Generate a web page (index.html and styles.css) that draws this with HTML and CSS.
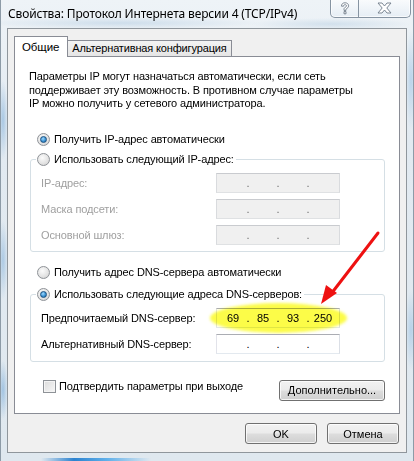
FILE: index.html
```html
<!DOCTYPE html>
<html lang="ru">
<head>
<meta charset="utf-8">
<title>Свойства: Протокол Интернета версии 4 (TCP/IPv4)</title>
<link rel="stylesheet" href="styles.css">
</head>
<body>
<div class="window">
  <div class="titlebar">
    <span class="title">Свойства: Протокол Интернета версии 4 (TCP/IPv4)</span>
    <div class="caption-btns">
      <div class="cbtn help">
        <svg width="12" height="13" viewBox="0 0 12 13"><path d="M2.5 4.2 C2.5 1.8 4 0.8 6 0.8 C8.2 0.8 9.6 2 9.6 3.8 C9.6 5.4 8.4 6.1 7.4 6.7 C7 7 7 7.2 7 7.8 L7 8.4 L5 8.4 L5 7.4 C5 6.2 5.6 5.6 6.5 5.1 C7.3 4.6 7.6 4.3 7.6 3.8 C7.6 3.1 7 2.7 6 2.7 C5 2.7 4.5 3.3 4.5 4.2 Z M5 9.6 L7 9.6 L7 11.8 L5 11.8 Z" fill="#fff" stroke="#6f7c89" stroke-width="0.9" stroke-linejoin="round"/></svg>
      </div>
      <div class="cbtn close">
        <svg width="15" height="12" viewBox="0 0 15 12"><path d="M1 1 L5 1 L7.5 4 L10 1 L14 1 L9.8 6 L14 11 L10 11 L7.5 8 L5 11 L1 11 L5.2 6 Z" fill="#fff" stroke="#6f7c89" stroke-width="0.9" stroke-linejoin="round"/></svg>
      </div>
    </div>
  </div>

  <div class="client">
    <div class="tabs">
      <div class="tab active">Общие</div>
      <div class="tab">Альтернативная конфигурация</div>
    </div>
    <div class="panel">
      <p class="desc">Параметры IP могут назначаться автоматически, если сеть<br>поддерживает эту возможность. В противном случае параметры<br>IP можно получить у сетевого администратора.</p>

      <div class="opt opt-ip-auto"><span class="radio checked"></span><span>Получить IP-адрес автоматически</span></div>

      <div class="group group-ip">
        <div class="legend"><span class="radio"></span><span>Использовать следующий IP-адрес:</span></div>
        <div class="frow"><span class="lbl dis">IP-адрес:</span><div class="ip dis"><span class="seg"></span><span class="dot">.</span><span class="seg"></span><span class="dot">.</span><span class="seg"></span><span class="dot">.</span><span class="seg"></span></div></div>
        <div class="frow"><span class="lbl dis">Маска подсети:</span><div class="ip dis"><span class="seg"></span><span class="dot">.</span><span class="seg"></span><span class="dot">.</span><span class="seg"></span><span class="dot">.</span><span class="seg"></span></div></div>
        <div class="frow"><span class="lbl dis">Основной шлюз:</span><div class="ip dis"><span class="seg"></span><span class="dot">.</span><span class="seg"></span><span class="dot">.</span><span class="seg"></span><span class="dot">.</span><span class="seg"></span></div></div>
      </div>

      <div class="opt opt-dns-auto"><span class="radio"></span><span>Получить адрес DNS-сервера автоматически</span></div>

      <div class="group group-dns">
        <div class="legend"><span class="radio checked"></span><span>Использовать следующие адреса DNS-серверов:</span></div>
        <div class="frow"><span class="lbl">Предпочитаемый DNS-сервер:</span><div class="ip hl-wrap"><span class="seg">69</span><span class="dot">.</span><span class="seg">85</span><span class="dot">.</span><span class="seg">93</span><span class="dot">.</span><span class="seg">250</span><span class="highlight"></span></div></div>
        <div class="frow"><span class="lbl">Альтернативный DNS-сервер:</span><div class="ip"><span class="seg"></span><span class="dot">.</span><span class="seg"></span><span class="dot">.</span><span class="seg"></span><span class="dot">.</span><span class="seg"></span></div></div>
      </div>

      <div class="bottom-row">
        <div class="chk-row"><span class="checkbox"></span><span>Подтвердить параметры при выходе</span></div>
        <button class="btn btn-adv">Дополнительно...</button>
      </div>

      <svg class="arrow" width="70" height="80" viewBox="0 0 70 80">
        <line x1="61" y1="1" x2="14" y2="62" stroke="#ee1111" stroke-width="3" stroke-linecap="round"/>
        <polygon points="4,72 9,53 20,61" fill="#ee1111"/>
      </svg>
    </div>
    <div class="dlg-btns">
      <button class="btn btn-dlg">OK</button>
      <button class="btn btn-dlg">Отмена</button>
    </div>
  </div>
  <div class="taskbar"></div>
</div>
</body>
</html>
```

FILE: styles.css
```css
html, body {
  margin: 0;
  padding: 0;
}
body {
  width: 414px;
  height: 461px;
  overflow: hidden;
  background: #e3ebf2;
  font-family: "Liberation Sans", Arial, sans-serif;
  font-size: 11px;
  letter-spacing: -0.12px;
  color: #000;
}
.window {
  position: relative;
  width: 414px;
  height: 461px;
  box-sizing: border-box;
  border-left: 1px solid #8d9ba7;
  border-right: 1px solid #8d9ba7;
  background:
    radial-gradient(ellipse 5px 40px at 2px 120px, rgba(120,170,215,0.55), transparent),
    radial-gradient(ellipse 5px 40px at 2px 260px, rgba(120,170,215,0.5), transparent),
    radial-gradient(ellipse 5px 30px at 2px 390px, rgba(120,170,215,0.6), transparent),
    radial-gradient(ellipse 6px 50px at 410px 80px, rgba(140,185,225,0.5), transparent),
    radial-gradient(ellipse 6px 40px at 410px 330px, rgba(140,185,225,0.5), transparent),
    radial-gradient(ellipse 140px 6px at 120px 23px, rgba(150,185,215,0.35), transparent),
    radial-gradient(ellipse 80px 6px at 330px 24px, rgba(150,185,215,0.3), transparent),
    linear-gradient(#eef3f7, #e2eaf1 30%, #dfe8ef);
}
.titlebar {
  height: 28px;
  display: flex;
  justify-content: space-between;
  align-items: flex-start;
}
.title {
  font-family: "Noto Sans", "Liberation Sans", sans-serif;
  font-size: 12px;
  line-height: 28px;
  padding-left: 7px;
  color: #000;
  letter-spacing: -0.15px;
}
.caption-btns {
  display: flex;
  margin-right: 2px;
  margin-top: -1px;
  height: 18px;
  border: 1px solid #8694a2;
  border-top: none;
  border-radius: 0 0 5px 5px;
  background: linear-gradient(rgba(255,255,255,0.7), rgba(225,235,244,0.6));
  box-shadow: inset 0 0 0 1px rgba(255,255,255,0.7);
}
.cbtn {
  display: flex;
  align-items: center;
  justify-content: center;
  height: 18px;
}
.cbtn.help {
  width: 27px;
  border-right: 1px solid #8694a2;
}
.cbtn.close {
  width: 51px;
}

.client {
  margin-left: 6px;
  width: 400px;
  height: 425px;
  box-sizing: border-box;
  border: 1px solid #8f969c;
  background: #f0f0f0;
  padding: 7px 6px 0 6px;
  display: flex;
  flex-direction: column;
}
.tabs {
  display: flex;
  align-items: flex-end;
  height: 20px;
  position: relative;
  z-index: 2;
}
.tab {
  box-sizing: border-box;
  border: 1px solid #898c95;
  border-bottom: none;
  height: 16px;
  line-height: 15px;
  padding: 0 4px 0 4px;
  background: linear-gradient(#f3f3f3, #e5e5e5);
  border-left: none;
  letter-spacing: -0.15px;
}
.tab.active {
  height: 21px;
  margin-bottom: -1px;
  line-height: 20px;
  background: #fff;
  border-left: 1px solid #898c95;
  padding: 0 8px 0 7px;
  font-size: 11.5px;
  letter-spacing: -0.1px;
}
.panel {
  position: relative;
  box-sizing: border-box;
  height: 358px;
  border: 1px solid #898c95;
  background: #fff;
  padding: 13px 0 0 0;
}
.desc {
  margin: 0 0 0 14px;
  line-height: 13.5px;
}
.opt {
  display: flex;
  align-items: center;
  height: 13px;
  margin-left: 22px;
}
.opt-ip-auto {
  margin-top: 22px;
}
.opt-dns-auto {
  margin-top: 14px;
}
.radio {
  position: relative;
  display: inline-block;
  box-sizing: border-box;
  width: 13px;
  height: 13px;
  border-radius: 50%;
  border: 1px solid #8e9297;
  background: radial-gradient(circle at 40% 35%, #fbfbfb, #e2e2e2 60%, #c9c9c9);
  margin-right: 4px;
  flex: none;
}
.radio.checked::after {
  content: "";
  position: absolute;
  left: 2px;
  top: 2px;
  width: 7px;
  height: 7px;
  box-sizing: border-box;
  border-radius: 50%;
  border: 1px solid #1c5180;
  background: radial-gradient(circle at 40% 35%, #9fd9ff, #3b93d4 55%, #1c5f9a);
}
.group {
  width: 355px;
  box-sizing: border-box;
  margin-left: 15px;
  border: 1px solid #d5dfe5;
  border-radius: 3px;
  padding: 0 0 6px 10px;
}
.group-ip {
  margin-top: 13px;
}
.group-dns {
  margin-top: 15px;
  padding-bottom: 7px;
}
.legend {
  display: flex;
  width: fit-content;
  align-items: center;
  height: 13px;
  background: #fff;
  margin: -7px 0 0 -5px;
  padding: 0 2px 0 1px;
}
.frow {
  display: flex;
  align-items: center;
  margin-top: 6px;
}
.legend + .frow {
  margin-top: 7px;
}
.lbl {
  width: 175px;
  flex: none;
}
.lbl.dis {
  color: #a0a0a0;
}
.ip {
  position: relative;
  width: 124px;
  height: 20px;
  box-sizing: border-box;
  border: 1px solid #abadb3;
  border-color: #abadb3 #dbdfe6 #e3e9ef #e2e3ea;
  background: #fff;
  display: flex;
  align-items: center;
  padding-left: 3px;
  letter-spacing: 0;
}
.ip.dis {
  background: #f0f0f0;
  border-color: #c9cbcf #d9dbde #dfe1e3 #d9dbde;
}
.seg {
  width: 26px;
  text-align: center;
}
.dot {
  width: 4px;
  text-align: center;
}
.ip.dis .dot {
  color: #6d6d6d;
}
.highlight {
  position: absolute;
  left: -7px;
  top: -6px;
  width: 137px;
  height: 30px;
  border-radius: 50%;
  background: rgba(252, 252, 40, 0.85);
  mix-blend-mode: multiply;
  filter: blur(1.5px);
  pointer-events: none;
}
.bottom-row {
  display: flex;
  align-items: flex-start;
  justify-content: space-between;
  margin: 18px 14px 0 28px;
}
.chk-row {
  display: flex;
  align-items: center;
  height: 13px;
}
.checkbox {
  display: inline-block;
  box-sizing: border-box;
  width: 13px;
  height: 13px;
  border: 1px solid #8e9297;
  background: linear-gradient(135deg, #dcdcdc, #f7f7f7);
  box-shadow: inset 0 0 0 1px #f4f4f4;
  margin-right: 3px;
}
.btn {
  font-family: "Liberation Sans", Arial, sans-serif;
  font-size: 11px;
  color: #000;
  box-sizing: border-box;
  height: 21px;
  border: 1px solid #707070;
  border-radius: 3px;
  background: linear-gradient(#f2f2f2 0%, #ebebeb 48%, #dddddd 52%, #cfcfcf 100%);
  box-shadow: inset 0 0 0 1px rgba(255,255,255,0.75);
  padding: 0;
}
.btn-adv {
  width: 106px;
}
.dlg-btns {
  display: flex;
  justify-content: flex-end;
  gap: 10px;
  margin-top: 9px;
  padding-right: 1px;
}
.btn-dlg {
  width: 72px;
}
.arrow {
  position: absolute;
  left: 302px;
  top: 175px;
  overflow: visible;
}
.taskbar {
  position: absolute;
  left: 40px;
  bottom: 0;
  width: 110px;
  height: 3px;
  background: linear-gradient(90deg, rgba(40,120,200,0), #2b82cf 30%, #5fb0ea 60%, rgba(60,150,220,0));
}
```
